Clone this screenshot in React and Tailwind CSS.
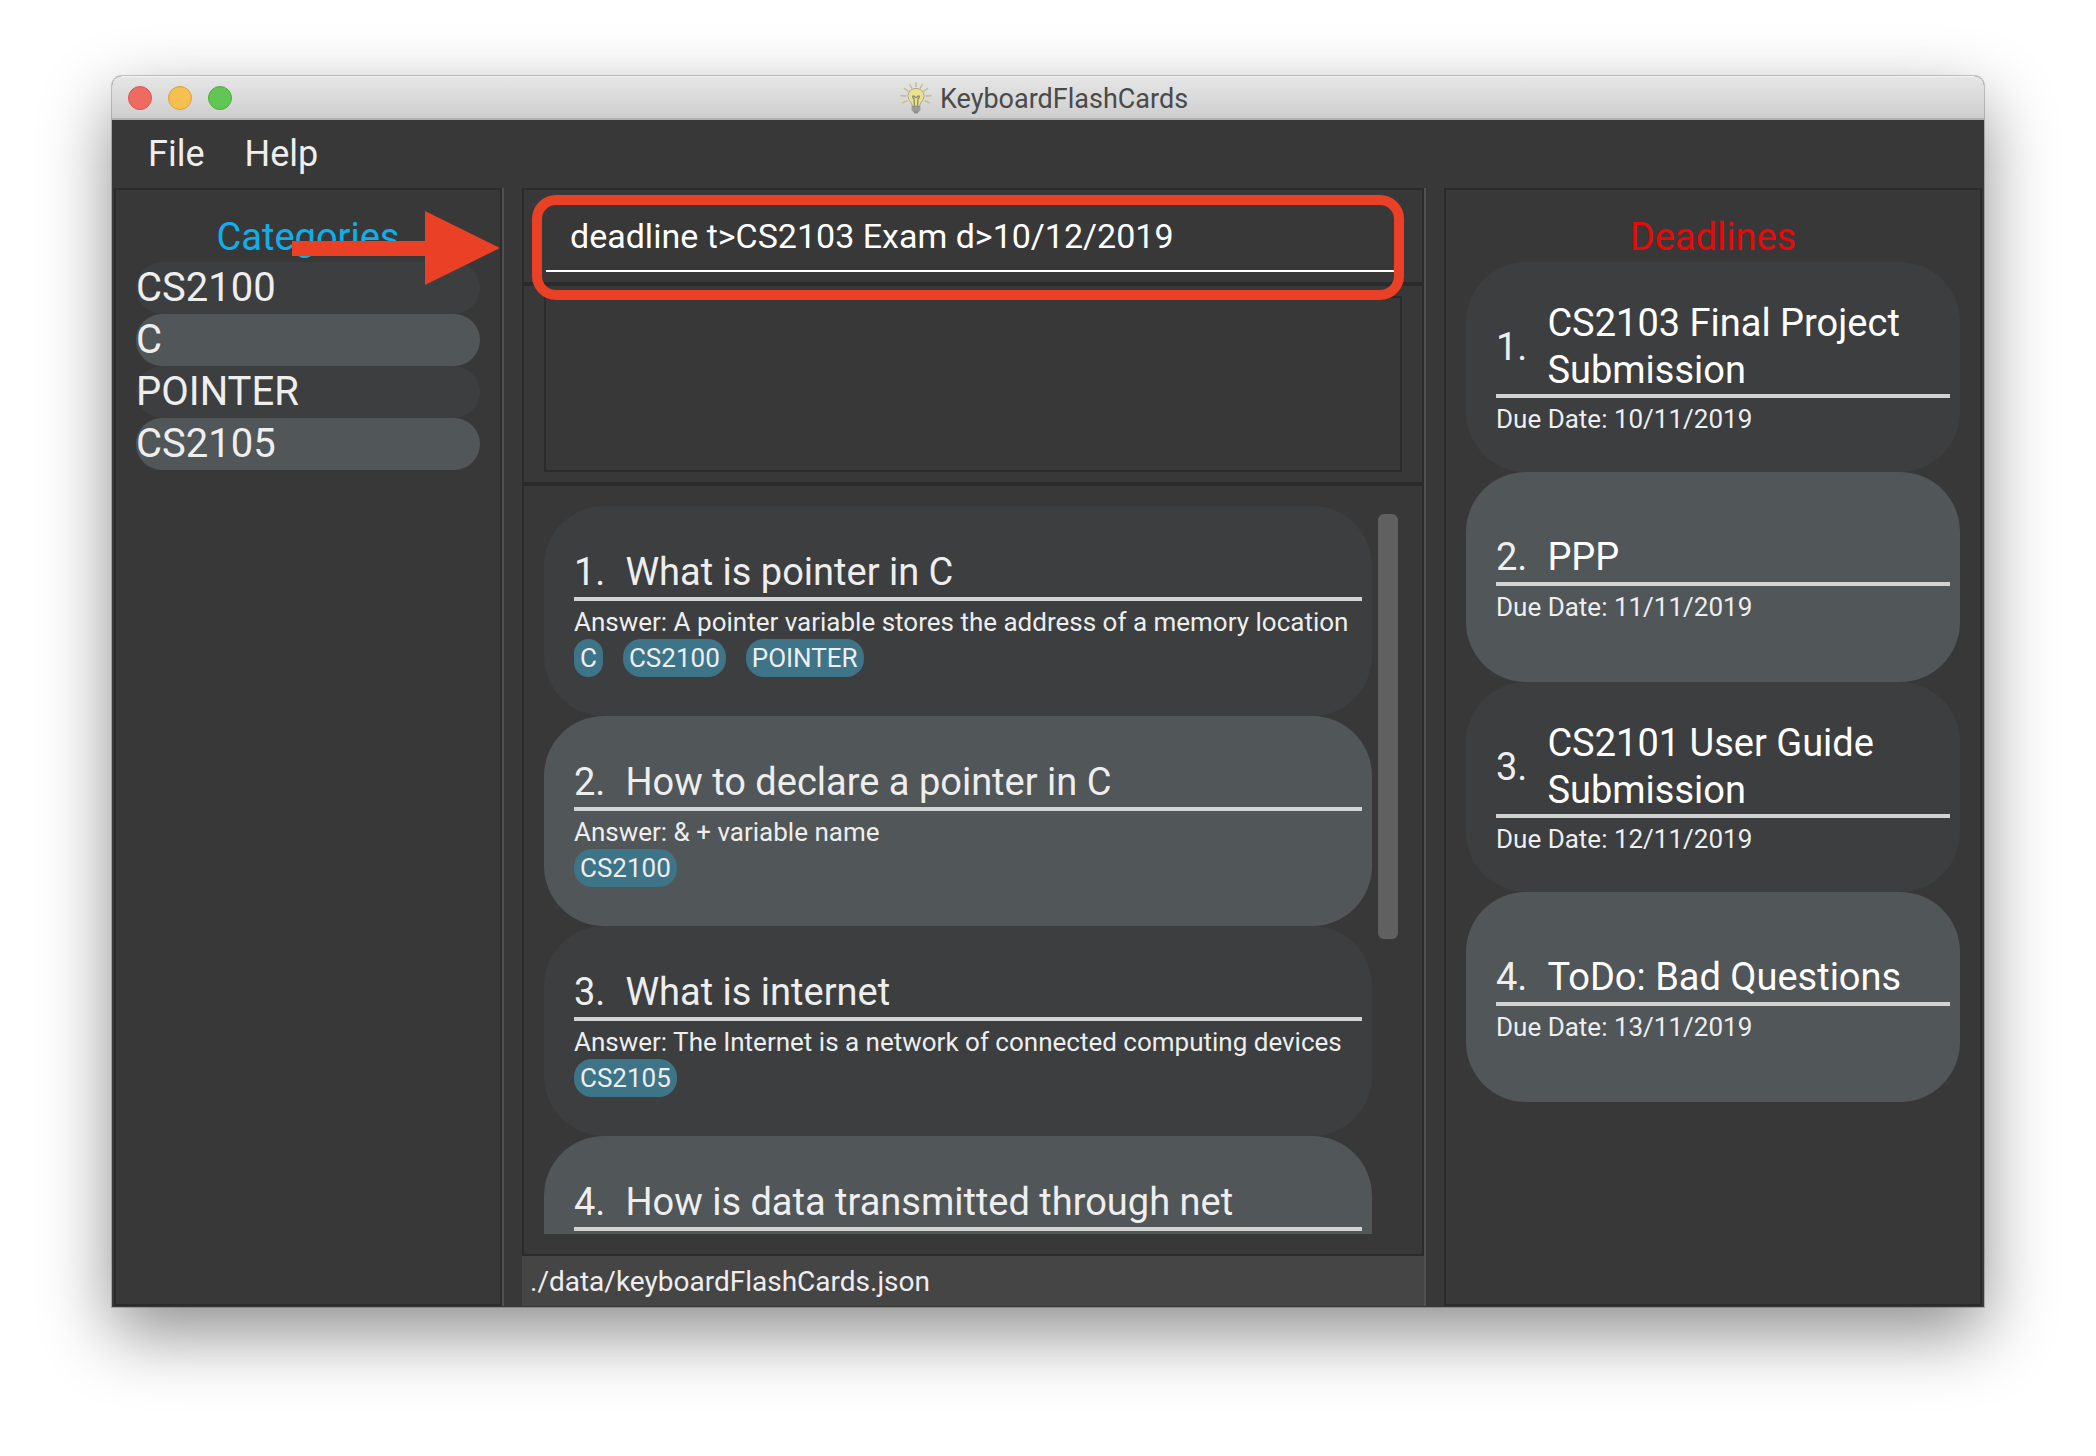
import React from "react";

const categories = ["CS2100", "C", "POINTER", "CS2105"];

const flashcards = [
  {
    question: "What is pointer in C",
    answer: "A pointer variable stores the address of a memory location",
    tags: ["C", "CS2100", "POINTER"],
  },
  { question: "How to declare a pointer in C", answer: "& + variable name", tags: ["CS2100"] },
  {
    question: "What is internet",
    answer: "The Internet is a network of connected computing devices",
    tags: ["CS2105"],
  },
  { question: "How is data transmitted through net" },
];

const deadlines = [
  { task: "CS2103 Final Project Submission", due: "10/11/2019" },
  { task: "PPP", due: "11/11/2019" },
  { task: "CS2101 User Guide Submission", due: "12/11/2019" },
  { task: "ToDo: Bad Questions", due: "13/11/2019" },
];

const rowColor = (i) => (i % 2 ? "bg-[#515658]" : "bg-[#3c3e3f]");

function BulbIcon() {
  return (
    <svg viewBox="0 0 32 32" className="size-8 shrink-0" fill="none" aria-hidden="true">
      <g stroke="#c4bb8a" strokeWidth="1.4" strokeLinecap="round">
        <path d="M16 .8v4M9.800 2.500l1.900 3.600M22.200 2.500l-1.900 3.600M4.500 6.500l3.600 2.600M27.500 6.500l-3.600 2.600M1 13.800l4.800.2M31 13.800l-4.800.2M2.500 20.800l4.300-1.900M29.500 20.800l-4.300-1.900" />
      </g>
      <path
        d="M16 6.500c-4.800 0-8 3.400-8 7.600 0 2.700 1.300 4.300 2.600 5.900 1 1.200 1.500 2.400 1.700 4.200h7.400c.2-1.800.7-3 1.700-4.200 1.300-1.600 2.600-3.200 2.600-5.900 0-4.200-3.200-7.600-8-7.600z"
        fill="#e9e391"
        stroke="#a9a58a"
        strokeWidth="1"
      />
      <path d="M14.500 24l-.5-7.500c-1.500-.3-2-2.300-.6-2.500 1.300-.1 1.200 1.500 2.600 1.500s1.300-1.600 2.600-1.500c1.400.2.9 2.200-.6 2.500l-.5 7.500" stroke="#8f8b70" strokeWidth="1.300" />
      <path d="M11.700 24h8.600v4.200l-1.600 1.600-1.200 1.600h-3l-1.200-1.600-1.600-1.600z" fill="#8f908d" />
      <path d="M12 26h8M12.200 28h7.600" stroke="#b0b1af" strokeWidth="0.8" />
    </svg>
  );
}

function TitleBar() {
  return (
    <header className="relative flex h-11 shrink-0 items-center justify-center gap-2 rounded-t-[10px] border-t border-b-2 border-t-[#f4f4f4] border-b-[#b1b1b1] bg-linear-to-b from-[#e6e6e6] to-[#cecece] pr-2">
      <div className="absolute left-4 flex gap-4">
        <button aria-label="Close" className="size-6 rounded-full border border-[#d9564b] bg-[#ed6b60]" />
        <button aria-label="Minimize" className="size-6 rounded-full border border-[#dca03b] bg-[#f5c04f]" />
        <button aria-label="Zoom" className="size-6 rounded-full border border-[#4fae40] bg-[#62c655]" />
      </div>
      <BulbIcon />
      <h1 className="pt-0.5 text-[27px] leading-8 text-[#4a4a4a]">KeyboardFlashCards</h1>
    </header>
  );
}

function ItemCard({ index, title, titleClass, children }) {
  return (
    <li className={`flex h-[210px] shrink-0 flex-col justify-center rounded-[60px] pr-2.5 pl-[30px] ${rowColor(index)}`}>
      <div className="box-content flex min-h-[50px] items-center gap-5 border-b-4 border-[#d2d4d3] pt-0.5 text-[38px] leading-[47px]">
        <span>{index + 1}.</span>
        <h3 className={titleClass}>{title}</h3>
      </div>
      {children}
    </li>
  );
}

function Detail({ children }) {
  return <p className="h-[38px] pt-1 text-[26px] leading-[34px] whitespace-nowrap">{children}</p>;
}

function CategoriesPanel() {
  return (
    <aside className="w-[390px] shrink-0 border-r-2 border-[#505050]">
      <div className="h-full border-2 border-[#2b2b2b] px-5 pt-5">
        <h2 className="pt-0.5 text-center text-[38px] leading-[50px] text-[#0db0ea]">Categories</h2>
        <ul>
          {categories.map((c, i) => (
            <li key={c} className={`h-[52px] rounded-[26px] text-[40px] leading-[52px] ${rowColor(i)}`}>
              {c}
            </li>
          ))}
        </ul>
      </div>
    </aside>
  );
}

function CommandBox() {
  return (
    <form className="relative h-24 shrink-0 border-2 border-[#2b2b2b] px-[22px] pt-2.5" onSubmit={(e) => e.preventDefault()}>
      <input
        aria-label="Command"
        defaultValue="deadline t>CS2103 Exam d>10/12/2019"
        className="h-[72px] w-full border-b-2 border-white bg-transparent px-6 pt-0.5 text-[34px] text-white outline-none"
      />
      <div className="pointer-events-none absolute top-[5px] right-[18px] left-2 z-10 h-[105px] rounded-[24px] border-10 border-[#ea4025]" />
    </form>
  );
}

function CenterPanel() {
  return (
    <main className="flex min-w-0 flex-1 flex-col border-r-2 border-[#505050]">
      <CommandBox />
      <section className="shrink-0 border-2 border-[#2b2b2b] px-5 py-2.5">
        <textarea
          aria-label="Result"
          readOnly
          className="block h-44 w-full resize-none border-2 border-[#2b2b2b] bg-transparent outline-none"
        />
      </section>
      <section className="flex min-h-0 flex-1 border-2 border-[#2b2b2b] py-5 pr-6 pl-5">
        <ul className="flex min-w-0 flex-1 flex-col overflow-hidden">
          {flashcards.map((f, i) => (
            <ItemCard key={f.question} index={i} title={f.question}>
              <Detail>{f.answer && `Answer: ${f.answer}`}</Detail>
              <div className="flex h-[38px] gap-5">
                {f.tags?.map((t) => (
                  <span key={t} className="rounded-[18px] bg-[#3e7488] px-1.5 text-[26px] leading-[38px]">
                    {t}
                  </span>
                ))}
              </div>
            </ItemCard>
          ))}
        </ul>
        <div className="ml-1.5 w-5 pt-2">
          <div className="h-[59%] rounded-md bg-[#606060]" />
        </div>
      </section>
      <footer className="h-[50px] shrink-0 bg-[#454545] px-2 pt-0.5 text-[28px] leading-[48px]">
        ./data/keyboardFlashCards.json
      </footer>
    </main>
  );
}

function DeadlinesPanel() {
  return (
    <aside className="w-[538px] shrink-0 border-2 border-[#2b2b2b] px-5 pt-5">
      <h2 className="pt-0.5 text-center text-[38px] leading-[50px] text-[#ea0808]">Deadlines</h2>
      <ul>
        {deadlines.map((d, i) => (
          <ItemCard key={d.task} index={i} title={d.task} titleClass="text-white">
            <Detail>Due Date: {d.due}</Detail>
          </ItemCard>
        ))}
      </ul>
    </aside>
  );
}

export default function App() {
  return (
    <div className="flex h-screen flex-col overflow-hidden bg-white px-28 pt-[76px] pb-[149px] font-['Roboto',sans-serif] text-[#eeeeee]">
      <div className="flex min-h-0 flex-1 flex-col rounded-t-[10px] bg-[#383838] shadow-[0_0_0_1px_rgba(0,0,0,0.2),0_26px_70px_rgba(0,0,0,0.45)]">
        <TitleBar />
        <nav className="flex h-[68px] shrink-0 items-center gap-10 px-9 text-[36px]">
          <button>File</button>
          <button>Help</button>
        </nav>
        <div className="relative flex min-h-0 flex-1 gap-[18px] px-0.5 pb-px">
          <CategoriesPanel />
          <CenterPanel />
          <DeadlinesPanel />
          <svg viewBox="0 0 208 74" className="pointer-events-none absolute top-[23px] left-[180px] w-[208px]" aria-hidden="true">
            <path d="M0 30h133V0l75 37-75 37V45H0z" fill="#ea4025" />
          </svg>
        </div>
      </div>
    </div>
  );
}
